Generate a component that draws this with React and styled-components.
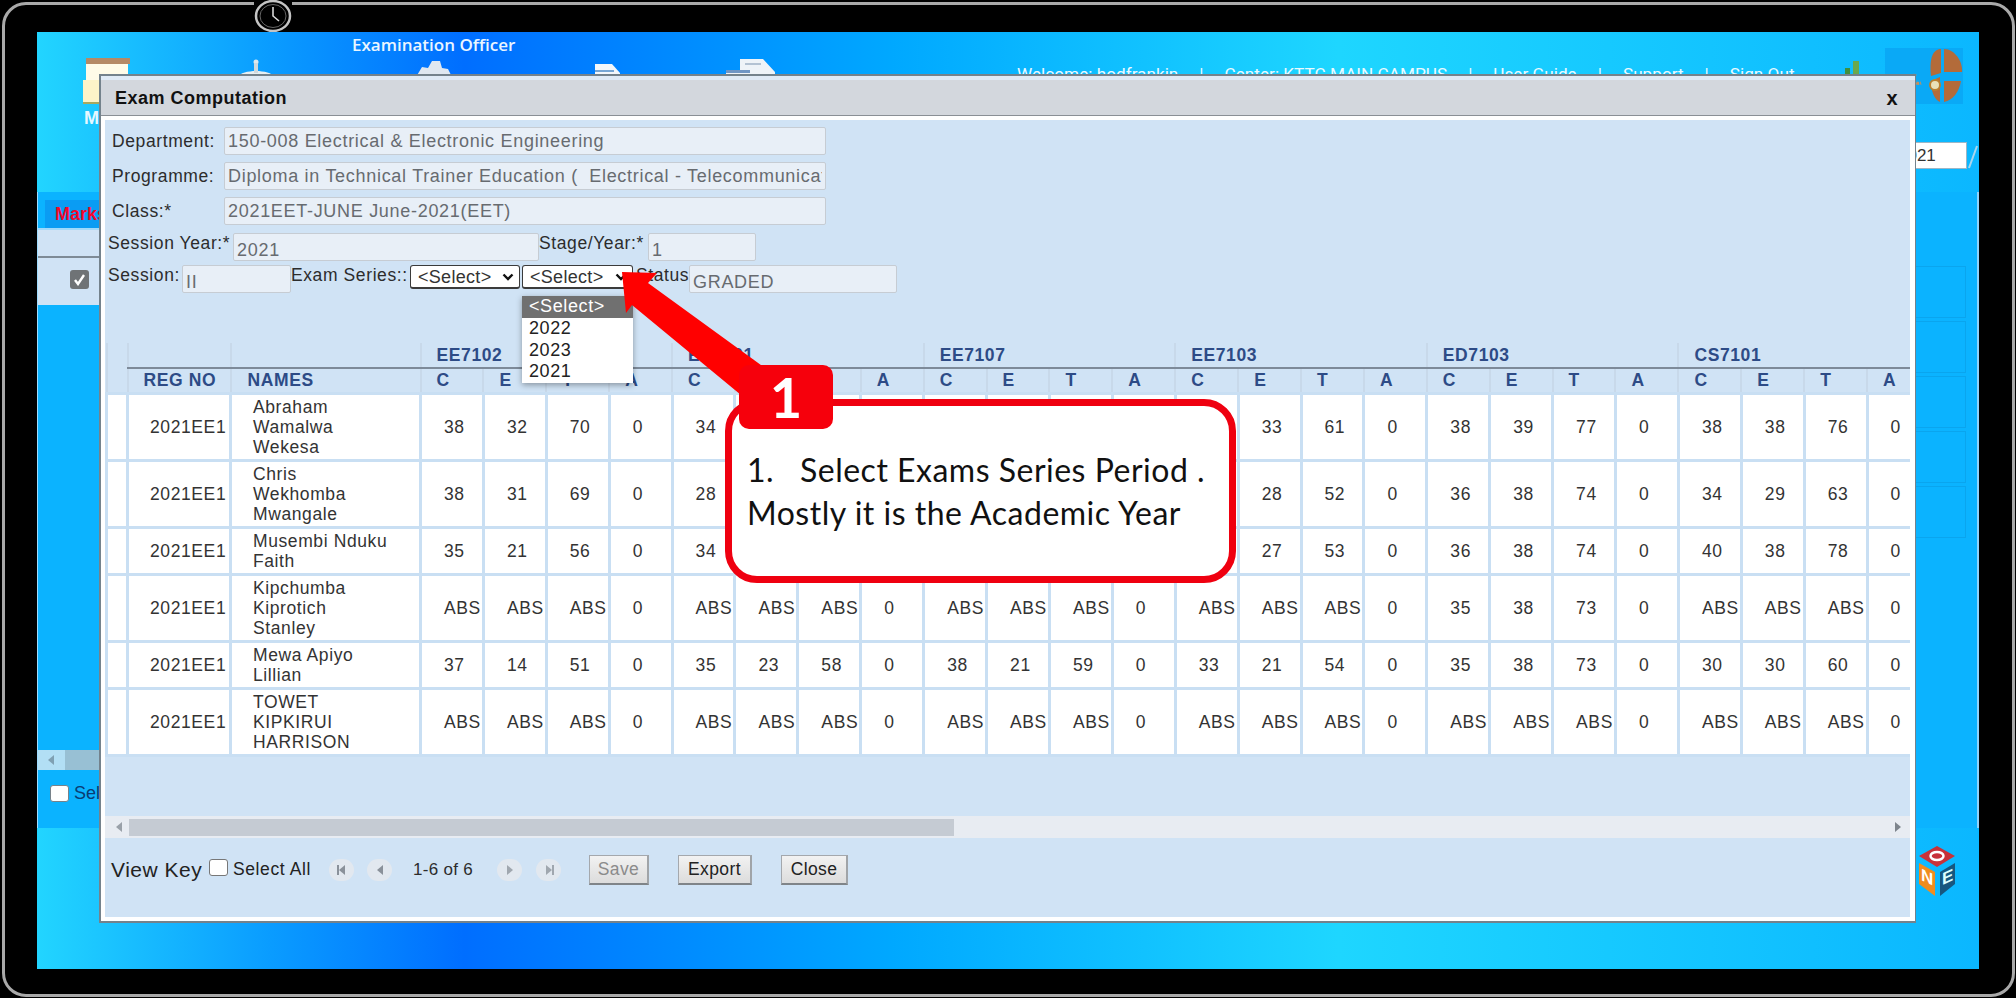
import React from 'react';
import styled, { createGlobalStyle } from 'styled-components';

const Global = createGlobalStyle`
  html, body { margin: 0; padding: 0; background: #000; overflow: hidden; }
  * { box-sizing: border-box; }
`;

const Stage = styled.div`
  position: relative;
  width: 2016px;
  height: 998px;
  background: #000;
  overflow: hidden;
  font-family: "Liberation Sans", Arial, sans-serif;
`;
const Bezel = styled.div`
  width: 2013px;
  height: 995px;
  margin: 2px 0 0 2px;
  padding: 27px 31px 23px 32px;
  border: 3px solid #a9a9a9;
  border-radius: 24px;
  background: #000;
`;
const CameraBadge = styled.div`
  position: absolute;
  left: 254px;
  top: 0;
  width: 38px;
  height: 32px;
  background: #000;
  display: flex;
  align-items: center;
  justify-content: center;
`;
const Desktop = styled.div`
  width: 1942px;
  height: 937px;
  display: flex;
  flex-direction: column;
  background: linear-gradient(90deg, #22d5ff 0%, #0a9cff 12%, #006eff 22%, #0080ff 29%, #00a8ff 44%, #1ed6ff 67%, #0bb7ff 100%);
`;
const Header = styled.header`
  height: 160px;
  display: grid;
  grid-template-columns: 979px minmax(0, 1fr);
`;
const HeaderLeft = styled.div`
  padding-left: 46px;
`;
const RoleTitle = styled.div`
  height: 26px;
  padding: 3px 0 0 269px;
  color: #eaf6ff;
  font: 600 17px/20px "Open Sans", sans-serif;
`;
const NavRow = styled.nav`
  display: flex;
`;
const NavItem = styled.div`
  width: ${p => p.$w}px;
  color: #e6f8ff;
  font: 700 18px/20px "Liberation Sans", sans-serif;
`;
const NavIcon = styled.svg`
  display: block;
  margin-top: ${p => p.$mt || 0}px;
`;
const NavLabel = styled.div`
  margin-top: 3px;
  padding-left: 1px;
`;
const HeaderRight = styled.div`
  display: flex;
  flex-direction: column;
  align-items: flex-end;
  padding-right: 1px;
`;
const TopRow = styled.div`
  width: 100%;
  display: flex;
  align-items: flex-start;
`;
const LinkRow = styled.div`
  display: flex;
  margin: 32px 0 0 1px;
  color: #eafaff;
  font: 400 17.2px/20px Roboto, sans-serif;
  white-space: nowrap;
`;
const LinkItem = styled.span`
  margin-right: ${p => p.$gap || 0}px;
`;
const Chart = styled.svg`
  margin: 28px 0 0 40px;
`;
const Logo = styled.svg`
  margin: 16px 15px 0 auto;
`;
const YearRow = styled.div`
  display: flex;
  align-items: center;
  gap: 1px;
  margin-top: 38px;
`;
const YearInput = styled.input`
  width: 78px;
  height: 27px;
  padding: 0 0 0 8px;
  border: 1px solid #9cb6c6;
  background: #fff;
  color: #333;
  font: 17px "Liberation Sans", sans-serif;
`;
const Panel = styled.section`
  height: 636px;
  display: flex;
  background: #0bb3ff;
  border-left: 1px solid #9fdcff;
  border-right: 2px solid #8fd3fb;
`;
const PanelMain = styled.div`
  flex: 1;
  display: flex;
  flex-direction: column;
`;
const TabBar = styled.div`
  height: 38px;
  padding: 8px 0 0 7px;
  border-bottom: 2px solid #9fd9fb;
`;
const Tab = styled.div`
  height: 28px;
  padding-left: 10px;
  background: #0a9cf3;
  color: #f4062b;
  font: 700 18px/28px "Liberation Sans", sans-serif;
`;
const GridHead = styled.div`
  height: 28px;
  background: #d0e3f5;
  border-bottom: 2px solid #7e8b96;
`;
const GridRow = styled.div`
  height: 47px;
  padding: 12px 0 0 32px;
  background: #d0e3f5;
`;
const CheckedBox = styled.div`
  width: 19px;
  height: 19px;
  border-radius: 3px;
  background: #6f7376;
  display: flex;
  align-items: center;
  justify-content: center;
`;
const OuterScroll = styled.div`
  height: 20px;
  margin-top: 445px;
  padding-left: 27px;
  display: flex;
  position: relative;
  background: #b2dff5;
`;
const OuterThumb = styled.div`
  flex: 1;
  background: #98c0d4;
`;
const OuterArrow = styled.svg`
  position: absolute;
  left: 9px;
  top: 5px;
`;
const OuterSelect = styled.label`
  display: flex;
  align-items: center;
  gap: 5px;
  margin: 13px 0 0 12px;
  color: #0a3c73;
  font: 18px/20px "Liberation Sans", sans-serif;
  white-space: nowrap;
`;
const OuterCheck = styled.span`
  width: 19px;
  height: 17px;
  border: 1.5px solid #77828a;
  border-radius: 3px;
  background: #fff;
`;
const SideBoxes = styled.div`
  width: 64px;
  padding: 74px 11px 0 0;
  display: flex;
  flex-direction: column;
  align-items: flex-end;
  gap: 3px;
`;
const SideBox = styled.div`
  width: 52px;
  height: 52px;
  border: 1px solid #0aa5ee;
`;
const AppFooter = styled.footer`
  flex: 1;
  display: flex;
  justify-content: flex-end;
  padding: 18px 22px 0 0;
`;

const Modal = styled.div`
  position: absolute;
  left: 99px;
  top: 74px;
  width: 1817px;
  height: 849px;
  display: flex;
  flex-direction: column;
  background: #fff;
  border: 2px solid #74828c;
  border-right-width: 1px;
`;
const TitleBar = styled.div`
  height: 40px;
  padding: 4px 17px 0 14px;
  display: flex;
  align-items: center;
  justify-content: space-between;
  background: linear-gradient(#dfeaf6 0 4px, #d3d7dd 4px);
  border-bottom: 1px solid #8a8f95;
  color: #111;
  font: 700 18px/20px "Liberation Sans", sans-serif;
  letter-spacing: .5px;
`;
const Close = styled.span`
  font-size: 20px;
`;
const ModalBody = styled.div`
  flex: 1;
  min-height: 0;
  margin: 4px 5px 4px 4px;
  display: flex;
  flex-direction: column;
  background: #d0e3f5;
  color: #2c2c2c;
  font-size: 17.5px;
  letter-spacing: .6px;
`;
const Form = styled.div`
  padding: 7px 0 0 3px;
  display: flex;
  flex-direction: column;
  gap: 7px;
`;
const FormRow = styled.div`
  display: flex;
  align-items: ${p => (p.$top ? 'flex-start' : 'center')};
  margin-top: ${p => p.$mt || 0}px;
  margin-left: ${p => p.$ml || 0}px;
`;
const Label = styled.label`
  width: ${p => (p.$w ? `${p.$w}px` : 'auto')};
  line-height: 20px;
  white-space: nowrap;
`;
const Field = styled.input`
  width: ${p => p.$w}px;
  height: 28px;
  padding: ${p => (p.$top ? '6px' : '0')} 3px 0;
  border: 1px solid #c6ccd3;
  border-radius: 2px;
  background: #e8eff7;
  color: #676b70;
  font: 18px "Liberation Sans", sans-serif;
  letter-spacing: .7px;
`;
const SeriesWrap = styled.div`
  position: relative;
  display: flex;
  gap: 2px;
  margin-right: 3px;
`;
const Select = styled.select`
  appearance: none;
  width: ${p => p.$w}px;
  height: 24px;
  padding: 0 18px 0 7px;
  border: 1px solid #3b3b3b;
  border-bottom-width: 2px;
  border-radius: 3px;
  background: #fff url("data:image/svg+xml,%3Csvg xmlns='http://www.w3.org/2000/svg' width='12' height='8'%3E%3Cpath d='M1.5 1.5 L6 6 L10.5 1.5' fill='none' stroke='%23111' stroke-width='2.4'/%3E%3C/svg%3E") no-repeat right 5px center;
  color: #333;
  font: 18px "Liberation Sans", sans-serif;
  letter-spacing: .3px;
`;
const Dropdown = styled.ul`
  position: absolute;
  left: 112px;
  top: 31px;
  width: 111px;
  margin: 0;
  padding: 0;
  list-style: none;
  background: #fff;
  box-shadow: 0 2px 6px rgba(0, 0, 0, .35);
  z-index: 2;
  font-size: 18px;
`;
const Option = styled.li`
  height: ${p => (p.$active ? 22 : 21.5)}px;
  padding: 0 7px;
  background: ${p => (p.$active ? '#707070' : 'transparent')};
  color: ${p => (p.$active ? '#fff' : '#222')};
  line-height: 21px;
`;
const TableWrap = styled.div`
  flex: 1;
  min-height: 0;
  margin-top: 50px;
  overflow: hidden;
`;
const Table = styled.table`
  width: 1824px;
  table-layout: fixed;
  border-collapse: collapse;
`;
const GroupTh = styled.th`
  height: 25px;
  padding: 0 0 0 15px;
  text-align: left;
  color: #2d4b86;
  font-size: 17.5px;
  border-left: 2px solid #c8d9ea;
  border-bottom: ${p => (p.$plain ? '0' : '2px solid #7d8a99')};
`;
const SubTh = styled.th`
  height: 25px;
  padding: 0 0 0 ${p => p.$pl || 15}px;
  text-align: left;
  color: #2d4b86;
  font-size: 17.5px;
  border-left: 2px solid #c8d9ea;
  border-bottom: 2px solid #77838f;
`;
const Td = styled.td`
  height: ${p => p.$h}px;
  padding: 0 0 0 ${p => p.$pl ?? 22}px;
  background: #fff;
  border: 3px solid #c9dff3;
  color: #333;
  line-height: 20px;
  white-space: nowrap;
  overflow: visible;
`;
const ScrollBar = styled.div`
  height: 22px;
  flex: none;
  display: flex;
  align-items: center;
  justify-content: space-between;
  padding: 0 7px 0 9px;
  position: relative;
  background: #e8ecf2;
`;
const Thumb = styled.div`
  position: absolute;
  left: 24px;
  top: 3px;
  bottom: 2px;
  width: 825px;
  background: #c5cbd3;
`;
const Toolbar = styled.div`
  height: 79px;
  flex: none;
  padding: 0 0 16px 6px;
  display: flex;
  align-items: center;
`;
const ViewKey = styled.span`
  width: 98px;
  font-size: 21px;
  letter-spacing: .5px;
  color: #222;
`;
const Check = styled.span`
  width: 19px;
  height: 17px;
  margin: -4px 5px 0 0;
  border: 1.5px solid #777;
  border-radius: 3px;
  background: #fff;
`;
const SelectAll = styled.span`
  width: 96px;
  color: #222;
  white-space: nowrap;
`;
const PageBtn = styled.span`
  width: 25px;
  height: 22px;
  margin-left: ${p => p.$ml || 0}px;
  border-radius: 11px;
  background: #e2e8ef;
  display: flex;
  align-items: center;
  justify-content: center;
`;
const PageText = styled.span`
  width: 63px;
  margin: 0 21px 0 21px;
  white-space: nowrap;
  letter-spacing: .3px;
  font-size: 17px;
`;
const Button = styled.button`
  width: ${p => p.$w}px;
  height: 30px;
  margin-left: ${p => p.$ml || 0}px;
  padding: 0;
  border: 1px solid #a4a8ad;
  border-bottom: 2px solid #7f8488;
  border-right: 2px solid #a0a4a8;
  background: linear-gradient(#f2f2f2, #dcdcdc);
  color: ${p => (p.disabled ? '#8b8b8b' : '#222')};
  font: 17.5px "Liberation Sans", sans-serif;
  letter-spacing: .4px;
`;
const ArrowSvg = styled.svg`
  position: absolute;
  left: 600px;
  top: 260px;
  z-index: 3;
`;
const Callout = styled.div`
  position: absolute;
  left: 725px;
  top: 399px;
  width: 511px;
  height: 184px;
  padding: 42px 0 0 15px;
  background: #fff;
  border: 7px solid #ef0010;
  border-radius: 32px;
  color: #111;
  font: 400 32px/43px Lato, "Open Sans", sans-serif;
  letter-spacing: .5px;
  white-space: nowrap;
  z-index: 4;
`;
const ListNo = styled.span`
  display: inline-block;
  width: 53px;
`;
const Badge = styled.div`
  position: absolute;
  left: 739px;
  top: 365px;
  width: 94px;
  height: 64px;
  border-radius: 10px;
  background: #f6000c;
  color: #fff;
  font: 700 56px/64px Lato, sans-serif;
  text-align: center;
  z-index: 5;
`;

const D = (a, b, c, e = '0') => [a, b, c, e];
const ABS = D('ABS', 'ABS', 'ABS');
const rows = [
  { h: 67, name: ['Abraham', 'Wamalwa', 'Wekesa'], v: [D(38, 32, 70), D(34, 30, 64), D(36, 28, 64), D(28, 33, 61), D(38, 39, 77), D(38, 38, 76)] },
  { h: 67, name: ['Chris', 'Wekhomba', 'Mwangale'], v: [D(38, 31, 69), D(28, 26, 54), D(33, 25, 58), D(24, 28, 52), D(36, 38, 74), D(34, 29, 63)] },
  { h: 47, name: ['Musembi Nduku', 'Faith'], v: [D(35, 21, 56), D(34, 24, 58), D(35, 22, 57), D(26, 27, 53), D(36, 38, 74), D(40, 38, 78)] },
  { h: 67, name: ['Kipchumba', 'Kiprotich', 'Stanley'], v: [ABS, ABS, ABS, ABS, D(35, 38, 73), ABS] },
  { h: 47, name: ['Mewa Apiyo', 'Lillian'], v: [D(37, 14, 51), D(35, 23, 58), D(38, 21, 59), D(33, 21, 54), D(35, 38, 73), D(30, 30, 60)] },
  { h: 67, name: ['TOWET', 'KIPKIRUI', 'HARRISON'], v: [ABS, ABS, ABS, ABS, ABS, ABS] },
];
const groups = ['EE7102', 'EE7101', 'EE7107', 'EE7103', 'ED7103', 'CS7101'];

const Tri = ({ dir = 'l', bar, color = '#8a919a' }) => (
  <svg width="10" height="12" viewBox="0 0 10 12">
    {dir === 'l'
      ? <path d="M8 1 L2 6 L8 11Z" fill={color} />
      : <path d="M2 1 L8 6 L2 11Z" fill={color} />}
    {bar && <rect x={dir === 'l' ? 0 : 8} y="1" width="2" height="10" fill={color} />}
  </svg>
);

function AppBackground() {
  return (
    <Desktop>
      <Header>
        <HeaderLeft>
          <RoleTitle>Examination Officer</RoleTitle>
          <NavRow>
            <NavItem $w={152}>
              <NavIcon width="48" height="47" viewBox="0 0 48 47">
                <rect x="3" y="0" width="44" height="6" fill="#b58a66" />
                <rect x="3" y="6" width="42" height="38" fill="#fffbe8" />
                <rect x="0" y="22" width="20" height="24" fill="#fdf3c8" />
                <rect x="0" y="44" width="46" height="2" fill="#a8a860" />
              </NavIcon>
              <NavLabel>Marks</NavLabel>
            </NavItem>
            <NavItem $w={177}>
              <NavIcon $mt={1} width="42" height="30" viewBox="0 0 42 30">
                <circle cx="21" cy="3" r="2.5" fill="#dfe8ee" />
                <path d="M2 18 C8 10 34 10 40 18 L36 22 H6Z" fill="#e7eef2" />
                <rect x="19" y="4" width="4" height="10" fill="#cfd9df" />
              </NavIcon>
            </NavItem>
            <NavItem $w={182}>
              <NavIcon $mt={1} width="42" height="30" viewBox="0 0 42 30">
                <path d="M4 18 L10 8 L16 9 L20 2 L28 2 L30 9 L36 10 L40 18 Z" fill="#dfe7f0" />
              </NavIcon>
            </NavItem>
            <NavItem $w={131}>
              <NavIcon $mt={5} width="28" height="30" viewBox="0 0 28 30">
                <path d="M1 1 H18 L26 10 V30 H1Z" fill="#f3f7fb" />
                <path d="M1 8 H20 M1 12 H22" stroke="#4f8cc8" strokeWidth="1.5" />
              </NavIcon>
            </NavItem>
            <NavItem $w={60}>
              <NavIcon width="52" height="30" viewBox="0 0 52 30">
                <path d="M15 1 H38 L50 14 V30 H1 V14 H15Z" fill="#eef3f8" />
                <rect x="1" y="12" width="24" height="3" fill="#6f95c4" />
                <path d="M20 6 H36" stroke="#9fb2c7" strokeWidth="1.5" />
              </NavIcon>
            </NavItem>
          </NavRow>
        </HeaderLeft>
        <HeaderRight>
          <TopRow>
            <LinkRow>
              <LinkItem $gap={21}>Welcome: hodfrankin</LinkItem>
              <LinkItem $gap={21}>|</LinkItem>
              <LinkItem $gap={21}>Center: KTTC MAIN CAMPUS</LinkItem>
              <LinkItem $gap={21}>|</LinkItem>
              <LinkItem $gap={21}>User Guide</LinkItem>
              <LinkItem $gap={21}>|</LinkItem>
              <LinkItem $gap={21}>Support</LinkItem>
              <LinkItem $gap={21}>|</LinkItem>
              <LinkItem>Sign Out</LinkItem>
            </LinkRow>
            <Chart width="26" height="24" viewBox="0 0 26 24">
              <rect x="2" y="14" width="5" height="10" fill="#4f9a4a" />
              <rect x="10" y="8" width="5" height="16" fill="#3f8f3f" />
              <rect x="18" y="1" width="6" height="23" fill="#6aa84f" />
            </Chart>
            <Logo width="78" height="56" viewBox="0 0 78 56">
              <rect width="78" height="56" fill="#0aa9f6" />
              <path d="M31 28 C24 24 28 38 36 35" fill="none" stroke="#c2905f" strokeWidth="3" strokeDasharray="3 1" />
              <path d="M46 28 C44 10 48 1 56 1 L56 25 L46 28Z" fill="#b36b3a" />
              <path d="M59 1 C70 1 78 14 77 24 L59 24Z" fill="#b36b3a" />
              <path d="M46 33 L55 29 L55 54 C50 52 46 44 46 33Z" fill="#b36b3a" />
              <path d="M59 33 L76 33 C74 44 68 52 59 54Z" fill="#b36b3a" />
              <circle cx="50" cy="37" r="5" fill="#e9e1b8" stroke="#b9802f" strokeWidth="2" />
            </Logo>
          </TopRow>
          <YearRow>
            <YearInput defaultValue="2021" />
            <svg width="10" height="26" viewBox="0 0 10 26">
              <path d="M1 25 L9 3" stroke="#a9d6ee" strokeWidth="2" />
            </svg>
          </YearRow>
        </HeaderRight>
      </Header>
      <Panel>
        <PanelMain>
          <TabBar><Tab>Marks</Tab></TabBar>
          <GridHead />
          <GridRow>
            <CheckedBox>
              <svg width="13" height="13" viewBox="0 0 13 13">
                <path d="M2 7 L5 11 L11 2" fill="none" stroke="#fff" strokeWidth="2.4" />
              </svg>
            </CheckedBox>
          </GridRow>
          <OuterScroll>
            <OuterArrow width="8" height="10" viewBox="0 0 8 10"><path d="M7 0 L1 5 L7 10Z" fill="#7fa0b3" /></OuterArrow>
            <OuterThumb />
          </OuterScroll>
          <OuterSelect><OuterCheck />Select All</OuterSelect>
        </PanelMain>
        <SideBoxes>
          {[0, 1, 2, 3, 4].map(i => <SideBox key={i} />)}
        </SideBoxes>
      </Panel>
      <AppFooter>
        <svg width="38" height="50" viewBox="0 0 38 50">
          <polygon points="18,0 36,10 18,21 0,10" fill="#c8323a" />
          <ellipse cx="18" cy="10" rx="6.5" ry="4" fill="none" stroke="#fff" strokeWidth="2.5" />
          <polygon points="0,17 16,26 16,50 0,38" fill="#f08c1e" />
          <polygon points="21,26 36,17 36,38 21,50" fill="#17577f" />
          <text x="2" y="33" fill="#fff" fontFamily="Liberation Sans" fontWeight="700" fontSize="17" transform="skewY(25)">N</text>
          <text x="23" y="50" fill="#dff" fontFamily="Liberation Sans" fontWeight="700" fontSize="17" transform="skewY(-25)">E</text>
        </svg>
      </AppFooter>
    </Desktop>
  );
}

function ExamModal() {
  return (
    <Modal>
      <TitleBar>
        <span>Exam Computation</span>
        <Close>x</Close>
      </TitleBar>
      <ModalBody>
        <Form>
          <FormRow $ml={4}><Label $w={112}>Department:</Label><Field $w={602} readOnly value="150-008 Electrical & Electronic Engineering" /></FormRow>
          <FormRow $ml={4}><Label $w={112}>Programme:</Label><Field $w={602} readOnly value="Diploma in Technical Trainer Education (  Electrical - Telecommunications)" /></FormRow>
          <FormRow $ml={4}><Label $w={112}>Class:*</Label><Field $w={602} readOnly value="2021EET-JUNE June-2021(EET)" /></FormRow>
          <FormRow $top $mt={1}>
            <Label $w={125}>Session Year:*</Label>
            <Field $w={306} $top readOnly value="2021" />
            <Label $w={109}>Stage/Year:*</Label>
            <Field $w={108} $top readOnly value="1" />
          </FormRow>
          <FormRow $top $mt={-3}>
            <Label $w={74}>Session:</Label>
            <Field $w={109} $top readOnly value="II" />
            <Label $w={119}>Exam Series::</Label>
            <SeriesWrap>
              <Select $w={110} defaultValue=""><option value="">{'<Select>'}</option></Select>
              <Select $w={111} defaultValue=""><option value="">{'<Select>'}</option></Select>
              <Dropdown>
                <Option $active>{'<Select>'}</Option>
                <Option>2022</Option>
                <Option>2023</Option>
                <Option>2021</Option>
              </Dropdown>
            </SeriesWrap>
            <Label $w={53}>Status</Label>
            <Field $w={208} $top readOnly value="GRADED" />
          </FormRow>
        </Form>
        <TableWrap>
          <Table>
            <colgroup>
              <col style={{ width: 21 }} />
              <col style={{ width: 103 }} />
              <col style={{ width: 190 }} />
              {Array.from({ length: 24 }, (_, i) => <col key={i} style={{ width: 62.9 }} />)}
            </colgroup>
            <thead>
              <tr>
                <GroupTh $plain />
                <GroupTh />
                <GroupTh />
                {groups.map(g => <GroupTh key={g} colSpan={4}>{g}</GroupTh>)}
              </tr>
              <tr>
                <SubTh />
                <SubTh>REG NO</SubTh>
                <SubTh $pl={16}>NAMES</SubTh>
                {groups.flatMap(g => ['C', 'E', 'T', 'A'].map(c => <SubTh key={g + c}>{c}</SubTh>))}
              </tr>
            </thead>
            <tbody>
              {rows.map((r, i) => (
                <tr key={i}>
                  <Td $h={r.h} $pl={0} />
                  <Td $h={r.h} $pl={21}>2021EE1</Td>
                  <Td $h={r.h} $pl={21}>{r.name.map((n, j) => <div key={j}>{n}</div>)}</Td>
                  {r.v.flatMap((g, gi) => g.map((x, k) => <Td key={`${gi}-${k}`} $h={r.h}>{x}</Td>))}
                </tr>
              ))}
            </tbody>
          </Table>
        </TableWrap>
        <ScrollBar>
          <Thumb />
          <Tri dir="l" color="#9aa1a9" />
          <Tri dir="r" color="#7d848c" />
        </ScrollBar>
        <Toolbar>
          <ViewKey>View Key</ViewKey>
          <Check />
          <SelectAll>Select All</SelectAll>
          <PageBtn><Tri dir="l" bar /></PageBtn>
          <PageBtn $ml={13}><Tri dir="l" /></PageBtn>
          <PageText>1-6 of 6</PageText>
          <PageBtn><Tri dir="r" color="#a0a7af" /></PageBtn>
          <PageBtn $ml={14}><Tri dir="r" bar color="#a0a7af" /></PageBtn>
          <Button $w={60} $ml={28} disabled>Save</Button>
          <Button $w={74} $ml={29}>Export</Button>
          <Button $w={67} $ml={29}>Close</Button>
        </Toolbar>
      </ModalBody>
    </Modal>
  );
}

export default function App() {
  return (
    <Stage>
      <Global />
      <Bezel>
        <AppBackground />
      </Bezel>
      <CameraBadge>
        <svg width="38" height="32" viewBox="0 0 38 32">
          <ellipse cx="19" cy="16" rx="17" ry="15" fill="#000" stroke="#c4c4c4" strokeWidth="2.5" />
          <ellipse cx="19" cy="16" rx="13" ry="11.5" fill="none" stroke="#666" strokeWidth="1" />
          <path d="M19 7 V16 L25 21" fill="none" stroke="#d8d8d8" strokeWidth="1.6" />
        </svg>
      </CameraBadge>
      <ExamModal />
      <ArrowSvg width="200" height="150" viewBox="0 0 200 150">
        <polygon points="22,12 57,13 48,23 165,108 141,135 32,45 26,53" fill="#ff0000" />
      </ArrowSvg>
      <Callout>
        <div><ListNo>1.</ListNo>Select Exams Series Period .</div>
        <div>Mostly it is the Academic Year</div>
      </Callout>
      <Badge>1</Badge>
    </Stage>
  );
}
